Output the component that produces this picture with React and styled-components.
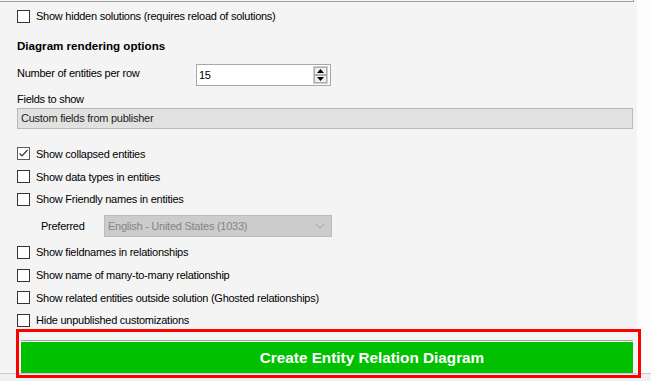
import styled, { createGlobalStyle } from 'styled-components';

const GlobalStyle = createGlobalStyle`
  html, body {
    margin: 0;
    padding: 0;
    background: #ffffff;
  }
  body {
    font-family: "Liberation Sans", Arial, sans-serif;
    color: #000;
  }
`;

const Root = styled.div`
  position: relative;
  width: 651px;
  height: 381px;
  overflow: hidden;
  background: #fdfdfd;
  display: flex;
  flex-direction: column;
`;

const Panel = styled.div`
  width: 637px;
  height: 373px;
  box-sizing: border-box;
  padding-left: 17px;
  background: #f4f4f4;
  display: flex;
  flex-direction: column;
  font-size: 11px;
  letter-spacing: -0.25px;
`;

const GroupTail = styled.div`
  margin-left: -17px;
  width: 634px;
  height: 2px;
  box-sizing: border-box;
  border-bottom: 1px solid #a0a0a0;
  border-right: 1px solid #a0a0a0;
`;

const CheckRow = styled.label`
  display: flex;
  align-items: center;
  gap: 6px;
  height: ${p => p.$h || '22.6px'};
  margin-top: ${p => p.$mt || 0};
  white-space: nowrap;
`;

const Box = styled.span`
  width: 13px;
  height: 13px;
  box-sizing: border-box;
  border: 1px solid ${p => (p.$checked ? '#5a5a5a' : '#333333')};
  background: #ffffff;
  flex: none;
  display: flex;
  align-items: center;
  justify-content: center;
`;

const Heading = styled.div`
  margin-top: 11px;
  height: 18px;
  line-height: 18px;
  font-weight: bold;
  font-size: 11.6px;
  letter-spacing: 0;
`;

const NumberRow = styled.div`
  margin-top: 9px;
  display: flex;
  align-items: flex-start;
  height: 22px;
`;

const FieldLabel = styled.span`
  width: ${p => p.$w};
  line-height: 18px;
  flex: none;
`;

const Spin = styled.div`
  width: 135px;
  height: 22px;
  box-sizing: border-box;
  border: 1px solid #a8a8a8;
  background: #ffffff;
  display: flex;
  align-items: center;
  padding: 0 2px 0 2px;
`;

const SpinValue = styled.span`
  flex: 1;
  line-height: 18px;
`;

const SpinButtons = styled.div`
  width: 15px;
  height: 18px;
  display: flex;
  flex-direction: column;
  border: 1px solid #cfcfcf;
  box-sizing: border-box;
`;

const SpinButton = styled.div`
  flex: 1;
  background: #f0f0f0;
  border: 1px solid #adadad;
  display: flex;
  align-items: center;
  justify-content: center;
`;

const Caption = styled.div`
  margin-top: 6px;
  line-height: 14px;
  height: 14px;
`;

const FieldsBar = styled.div`
  margin-top: 2px;
  width: 616px;
  height: 21px;
  box-sizing: border-box;
  border: 1px solid #b9b9b9;
  background: #e1e1e1;
  color: #1e1e1e;
  padding-left: 3px;
  line-height: 19px;
`;

const Group = styled.div`
  margin-top: 13.7px;
  display: flex;
  flex-direction: column;
`;

const PreferredRow = styled.div`
  height: 30.7px;
  display: flex;
  align-items: center;
  padding-left: 24px;
`;

const Select = styled.div`
  width: 228px;
  height: 22px;
  box-sizing: border-box;
  border: 1px solid #bcbcbc;
  background: #cccccc;
  color: #858585;
  display: flex;
  align-items: center;
  justify-content: space-between;
  padding: 0 6px 0 3px;
`;

const ButtonArea = styled.div`
  margin-top: auto;
  margin-left: 4px;
  width: 612px;
  border-top: 1px solid #a4a4a4;
  padding-top: 1px;
`;

const GreenButton = styled.button`
  display: block;
  width: 100%;
  height: 31px;
  border: none;
  margin: 0;
  padding: 0 0 0 90px;
  background: #00c000;
  color: #ffffff;
  font-family: "Liberation Sans", Arial, sans-serif;
  font-weight: bold;
  font-size: 15.3px;
  letter-spacing: 0;
`;

const BottomStrip = styled.div`
  height: 8px;
  box-sizing: border-box;
  border-top: 1px solid #c9c9d3;
  background: #f0f0f3;
`;

const Highlight = styled.div`
  position: absolute;
  left: 16px;
  top: 329px;
  width: 625px;
  height: 49px;
  box-sizing: border-box;
  border: 3px solid #ff0000;
  pointer-events: none;
`;

const Check = ({ checked, children, ...rest }) => (
  <CheckRow {...rest}>
    <Box $checked={checked}>
      {checked && (
        <svg width="11" height="11" viewBox="0 0 11 11">
          <polyline points="1.5,5.5 4,8 9.5,2" fill="none" stroke="#333" strokeWidth="1.2" />
        </svg>
      )}
    </Box>
    <span>{children}</span>
  </CheckRow>
);

const Arrow = ({ up }) => (
  <svg width="7" height="4" viewBox="0 0 7 4">
    <polygon points={up ? '0,4 7,4 3.5,0' : '0,0 7,0 3.5,4'} fill="#000" />
  </svg>
);

export default function App() {
  return (
    <>
      <GlobalStyle />
      <Root>
        <Panel>
          <GroupTail />
          <Check $h="20px" $mt="4px">Show hidden solutions (requires reload of solutions)</Check>
          <Heading>Diagram rendering options</Heading>
          <NumberRow>
            <FieldLabel $w="179px">Number of entities per row</FieldLabel>
            <Spin>
              <SpinValue>15</SpinValue>
              <SpinButtons>
                <SpinButton><Arrow up /></SpinButton>
                <SpinButton><Arrow /></SpinButton>
              </SpinButtons>
            </Spin>
          </NumberRow>
          <Caption>Fields to show</Caption>
          <FieldsBar>Custom fields from publisher</FieldsBar>
          <Group>
            <Check checked>Show collapsed entities</Check>
            <Check>Show data types in entities</Check>
            <Check>Show Friendly names in entities</Check>
            <PreferredRow>
              <FieldLabel $w="63px">Preferred</FieldLabel>
              <Select>
                <span>English - United States (1033)</span>
                <svg width="10" height="6" viewBox="0 0 10 6">
                  <polyline points="0.5,0.5 5,5 9.5,0.5" fill="none" stroke="#a4a4a4" strokeWidth="1" />
                </svg>
              </Select>
            </PreferredRow>
            <Check>Show fieldnames in relationships</Check>
            <Check>Show name of many-to-many relationship</Check>
            <Check>Show related entities outside solution (Ghosted relationships)</Check>
            <Check>Hide unpublished customizations</Check>
          </Group>
          <ButtonArea>
            <GreenButton>Create Entity Relation Diagram</GreenButton>
          </ButtonArea>
        </Panel>
        <BottomStrip />
        <Highlight />
      </Root>
    </>
  );
}
